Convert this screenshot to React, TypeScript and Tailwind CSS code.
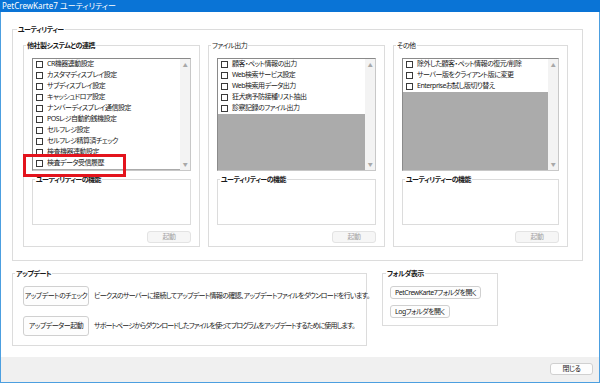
import clsx from "clsx";
import { ReactNode } from "react";

const linked = [
  "CR機器連動設定",
  "カスタマディスプレイ設定",
  "サブディスプレイ設定",
  "キャッシュドロア設定",
  "ナンバーディスプレイ通信設定",
  "POSレジ自動釣銭機設定",
  "セルフレジ設定",
  "セルフレジ精算済チェック",
  "検査機器連動設定",
  "検査データ受信履歴",
];

const fileOut = [
  "顧客・ペット情報の出力",
  "Web検索サービス設定",
  "Web検索用データ出力",
  "狂犬病予防接種リスト抽出",
  "診察記録のファイル出力",
];

const others = [
  "除外した顧客・ペット情報の復元/削除",
  "サーバー版をクライアント版に変更",
  "Enterpriseお試し版切り替え",
];

const Group = ({
  title,
  bold,
  className,
  legendClass,
  children,
}: {
  title: string;
  bold?: boolean;
  className?: string;
  legendClass?: string;
  children: ReactNode;
}) => (
  <fieldset className={clsx("min-w-0 border border-[#dcdcdc]", className)}>
    <legend className={clsx("px-[1px] leading-[11px]", bold && "font-bold", legendClass ?? "ml-[2px]")}>
      {title}
    </legend>
    {children}
  </fieldset>
);

const CheckList = ({ items }: { items: string[] }) => (
  <div className="flex h-[113px] border border-[#8a8a8a] border-r-[#c8c8c8] border-b-[#c8c8c8] bg-white">
    <div className="flex flex-1 flex-col overflow-hidden">
      {items.map((item) => (
        <div key={item} className="flex h-[11px] shrink-0 items-center whitespace-nowrap">
          <span className="ml-[3px] size-[7px] shrink-0 border border-[#3a3a3a] bg-white" />
          <span className="ml-[4px] text-[#1a1a1a]">{item}</span>
        </div>
      ))}
      <div className="flex-1 bg-[#ababab]" />
    </div>
    <div className="flex w-[10px] flex-col items-center justify-between bg-[#f3f3f3] py-[3px] text-[5px] leading-[6px] text-[#a8a8a8]">
      <span>▲</span>
      <span>▼</span>
    </div>
  </div>
);

const UtilityPanel = ({ title, bold, items, width }: { title: string; bold?: boolean; items: string[]; width: string }) => (
  <Group title={title} bold={bold} className={width}>
    <div className="flex flex-col px-[8px] pt-[7px] pb-[3px]">
      <CheckList items={items} />
      <Group title="ユーティリティーの機能" bold className="mt-[3px]">
        <div className="h-[39px]" />
      </Group>
      <div className="mt-[6px] flex justify-end">
        <button className="h-[12px] w-[44px] rounded-[3px] border border-[#e3e3e3] bg-[#f6f6f6] leading-[10px] text-[#a3a3a3]">
          起動
        </button>
      </div>
    </div>
  </Group>
);

const Btn = ({ children, className }: { children: ReactNode; className?: string }) => (
  <button
    className={clsx(
      "rounded-[3px] border border-[#d0d0d0] bg-[#fdfdfd] leading-[10px] whitespace-nowrap text-[#1a1a1a]",
      className
    )}
  >
    {children}
  </button>
);

export default function App() {
  return (
    <div className="relative flex h-[383px] w-[600px] flex-col bg-white font-['Noto_Sans','Noto_Sans_CJK_JP',sans-serif] text-[7px] tracking-[-0.5px] text-[#1a1a1a] [font-feature-settings:'palt']">
      <div className="flex h-[12px] items-center bg-[#0a74d6] pl-[2px] text-[8px] leading-[12px] tracking-normal text-white">
        PetCrewKarte7 ユーティリティー
      </div>

      <div className="flex flex-1 flex-col border-x border-b border-[#4c9fe0]">
        <div className="flex flex-1 flex-col">
          <Group title="ユーティリティー" bold className="mt-[12px] ml-[11px] w-[571px]" legendClass="ml-[4px]">
            <div className="flex gap-[8px] px-[10px] pt-[5px] pb-[13px]">
              <UtilityPanel title="他社製システムとの連携" bold items={linked} width="w-[177px]" />
              <UtilityPanel title="ファイル出力" items={fileOut} width="w-[177px]" />
              <UtilityPanel title="その他" items={others} width="w-[175px]" />
            </div>
          </Group>

          <div className="mt-[7px] ml-[11px] flex items-start gap-[15px]">
            <Group title="アップデート" bold className="w-[355px]">
              <div className="flex flex-col gap-[10px] px-[10px] pt-[7px] pb-[9px]">
                <div className="flex items-center gap-[5px]">
                  <Btn className="h-[20px] w-[66px] shrink-0">アップデートのチェック</Btn>
                  <span className="whitespace-nowrap tracking-[-0.7px]">
                    ビークスのサーバーに接続してアップデート情報の確認、アップデートファイルをダウンロードを行います。
                  </span>
                </div>
                <div className="flex items-center gap-[5px]">
                  <Btn className="h-[20px] w-[66px] shrink-0">アップデーター起動</Btn>
                  <span className="whitespace-nowrap tracking-[-0.9px]">
                    サポートページからダウンロードしたファイルを使ってプログラムをアップデートするために使用します。
                  </span>
                </div>
              </div>
            </Group>

            <Group title="フォルダ表示" bold className="w-[116px]" legendClass="ml-[3px]">
              <div className="flex flex-col items-start gap-[6px] pt-[7px] pb-[7px] pl-[7px]">
                <Btn className="h-[13px] px-[4px]">PetCrewKarte7フォルダを開く</Btn>
                <Btn className="h-[13px] px-[4px]">Logフォルダを開く</Btn>
              </div>
            </Group>
          </div>
        </div>

        <div className="flex h-[25px] items-start justify-end bg-[#f0f0f0] pt-[6px] pr-[6px]">
          <Btn className="h-[12px] w-[43px]">閉じる</Btn>
        </div>
      </div>

      {/* highlight annotation */}
      <div className="absolute top-[154px] left-[23px] h-[23px] w-[103px] border-[3px] border-[#e3141d]" />
    </div>
  );
}
